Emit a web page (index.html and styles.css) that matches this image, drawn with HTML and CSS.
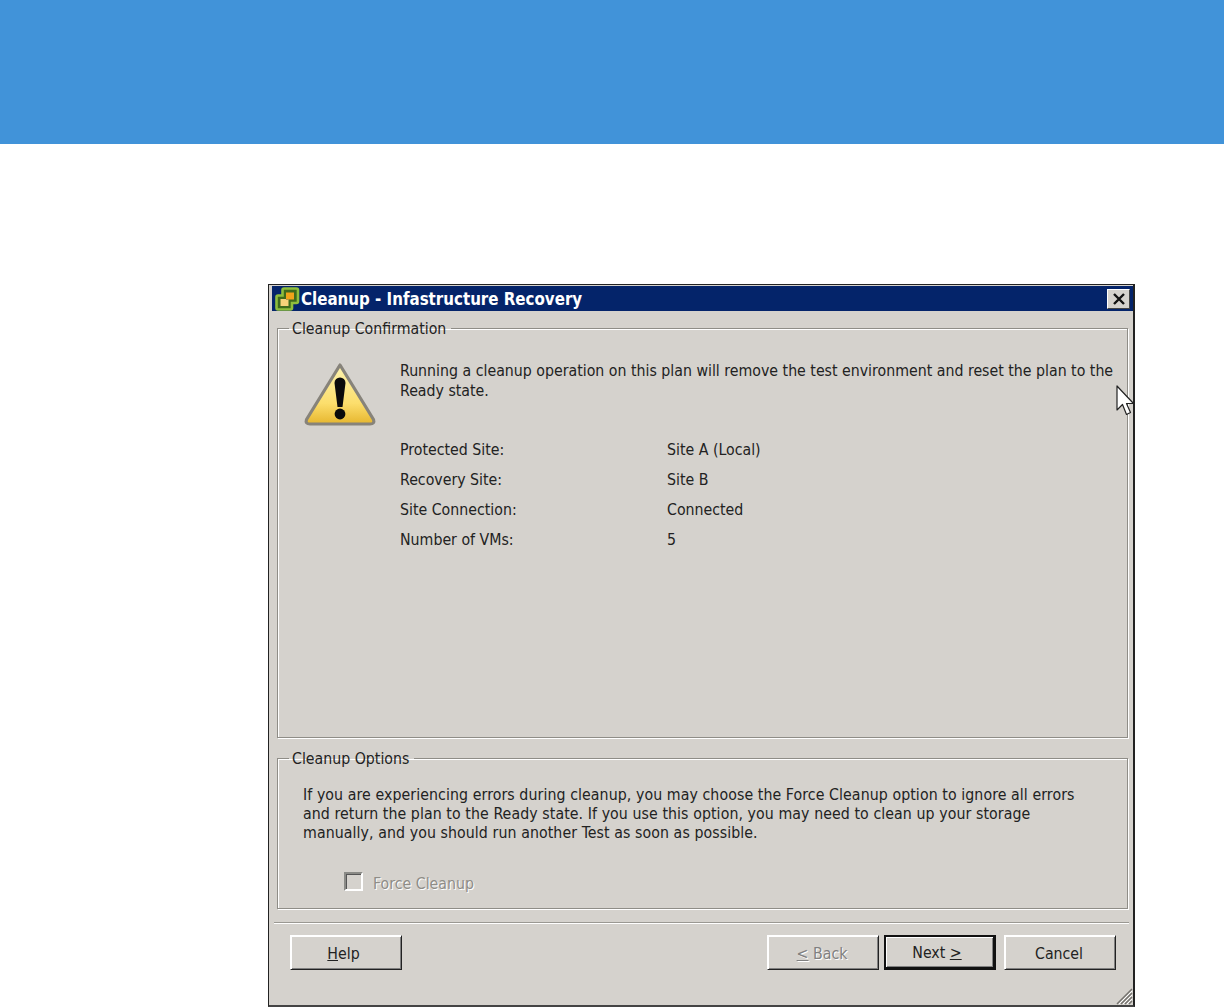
FILE: index.html
```html
<!DOCTYPE html>
<html lang="en">
<head>
<meta charset="utf-8">
<title>Cleanup - Infastructure Recovery</title>
<link rel="stylesheet" href="styles.css">
</head>
<body>
<header class="banner"></header>
<main class="stage">
  <section class="dialog">
    <div class="titlebar">
      <svg class="app-icon" viewBox="0 0 26 26" width="26" height="26">
        <path d="M10 2.500h12.500a1.500 1.500 0 0 1 1.500 1.500v11.500a1.500 1.500 0 0 1-1.500 1.500H18v5a1.500 1.500 0 0 1-1.500 1.500H4a1.500 1.500 0 0 1-1.500-1.500V11A1.500 1.500 0 0 1 4 9.500h4.500V4A1.500 1.500 0 0 1 10 2.500z" fill="#3f6a1c" stroke="#8fbe3c" stroke-width="2.600"/>
        <path d="M12 6.500h8v7h-8z" fill="#f2a31a"/>
        <path d="M6.500 13h8v7h-8z" fill="#f7d27a"/>
        <path d="M12 13h2.500v.5H12z" fill="#7a5a12"/>
      </svg>
      <span class="title-text">Cleanup - Infastructure Recovery</span>
      <button class="close" type="button" aria-label="Close">
        <svg viewBox="0 0 14 12" width="14" height="12"><path d="M2 1l10 10M12 1L2 11" stroke="#111" stroke-width="2.400" fill="none"/></svg>
      </button>
    </div>
    <div class="content">
      <fieldset class="group group-confirm">
        <legend>Cleanup Confirmation</legend>
        <div class="confirm-row">
          <svg class="warn" viewBox="0 0 74 66" width="74" height="66">
            <defs>
              <linearGradient id="warnFill" x1="0" y1="0" x2="0" y2="1">
                <stop offset="0" stop-color="#fdf3b0"/>
                <stop offset="0.650" stop-color="#fcde6c"/>
                <stop offset="1" stop-color="#e6b62e"/>
              </linearGradient>
            </defs>
            <path d="M37 4 L70.500 58.500 Q72 63 67 63 L7 63 Q2 63 3.500 58.500 Z" fill="url(#warnFill)" stroke="#87837a" stroke-width="3.200" stroke-linejoin="round"/>
            <path d="M31.500 22a5.500 5.500 0 0 1 11 0L39.500 46h-5z" fill="#0b0b0b"/>
            <circle cx="37" cy="53" r="5.400" fill="#0b0b0b"/>
          </svg>
          <div class="confirm-body">
            <p class="message">Running a cleanup operation on this plan will remove the test environment and reset the plan to the Ready state.</p>
            <dl class="facts">
              <dt>Protected Site:</dt><dd>Site A (Local)</dd>
              <dt>Recovery Site:</dt><dd>Site B</dd>
              <dt>Site Connection:</dt><dd>Connected</dd>
              <dt>Number of VMs:</dt><dd>5</dd>
            </dl>
          </div>
        </div>
      </fieldset>
      <fieldset class="group group-options">
        <legend>Cleanup Options</legend>
        <p class="options-text">If you are experiencing errors during cleanup, you may choose the Force Cleanup option to ignore all errors and return the plan to the Ready state. If you use this option, you may need to clean up your storage manually, and you should run another Test as soon as possible.</p>
        <label class="force">
          <span class="check"></span>
          <span class="force-label">Force Cleanup</span>
        </label>
      </fieldset>
    </div>
    <div class="separator"></div>
    <div class="actions">
      <button class="btn" type="button"><u>H</u>elp</button>
      <div class="actions-right">
        <button class="btn btn-disabled" type="button"><u>&lt;</u> Back</button>
        <button class="btn btn-default" type="button">Next <u>&gt;</u></button>
        <button class="btn btn-cancel" type="button">Cancel</button>
      </div>
    </div>
    <svg class="grip" viewBox="0 0 18 18" width="18" height="18">
      <path d="M17 2L2 17M17 6L6 17M17 10L10 17M17 14L14 17" stroke="#75736e" stroke-width="1.500" fill="none"/>
      <path d="M17 4L4 17M17 8L8 17M17 12L12 17" stroke="#fff" stroke-width="1" fill="none"/>
    </svg>
    <svg class="cursor" viewBox="0 0 18 32" width="18" height="32">
      <path d="M1 1V25L6.500 19.500L10.500 29.500L14.500 27.500L10.500 18.500H17.500Z" fill="#fff" stroke="#222" stroke-width="1.200" stroke-linejoin="round"/>
    </svg>
  </section>
</main>
</body>
</html>
```
FILE: styles.css
```css
* { box-sizing: border-box; }
html, body { margin: 0; padding: 0; background: #fff; }
body { height: 1007px; overflow: hidden; font-family: "DejaVu Sans Condensed", "DejaVu Sans", sans-serif; font-size: 15.750px; color: #222; }
.banner { height: 144px; background: #4193d9; }
.stage { padding: 140px 0 0 268px; }
.dialog {
  position: relative;
  width: 867px;
  height: 723px;
  background: #d5d2cd;
  border: 1px solid #222;
  border-right-width: 2px;
  border-bottom: 2px solid #444;
}
.titlebar {
  height: 25px;
  margin: 1px 0 0 3px;
  background: #04246a;
  display: flex;
  align-items: center;
  padding: 0 3px 0 2px;
  color: #fff;
  font-weight: bold;
}
.app-icon { flex: none; margin-right: 1px; }
.title-text { font-size: 16.750px; flex: 1; }
.close {
  width: 23px;
  height: 20px;
  padding: 0;
  background: #d5d2cd;
  border: 1px solid;
  border-color: #fff #444 #444 #fff;
  display: flex;
  align-items: center;
  justify-content: center;
}
.content { padding: 0 5px 0 8px; }
.group {
  margin: 0;
  padding: 0;
  min-width: 0;
  border: 1px solid #8f8d87;
  box-shadow: 1px 1px 0 #fff, inset 1px 1px 0 #fff;
}
.group legend { margin-left: 11px; padding: 0 5px 0 3px; line-height: 19px; color: #222; }
.group-confirm { height: 419px; margin-top: 8px; }
.group-options { height: 160px; margin-top: 11px; }
.confirm-row { display: flex; padding: 23px 0 0 25px; }
.warn { flex: none; margin-right: 23px; }
.confirm-body { flex: 1; }
.message { margin: 0; line-height: 19.500px; padding-right: 6px; }
.facts { margin: 40px 0 0; display: grid; grid-template-columns: 267px 1fr; grid-auto-rows: 30px; line-height: 19px; }
.facts dt, .facts dd { margin: 0; }
.options-text { margin: 17px 40px 0 25px; line-height: 19px; letter-spacing: 0.080px; }
.force { display: flex; align-items: center; margin: 30px 0 0 66px; gap: 10px; }
.check { width: 19px; height: 19px; margin-bottom: 4px; border: 2px solid; border-color: #8a8a86 #fff #fff #8a8a86; box-shadow: inset 1px 1px 0 #555; }
.force-label { color: #8f8d87; text-shadow: 1px 1px 0 #fff; }
.separator { height: 2px; margin: 13px 4px 0 5px; background: #9a9892; border-bottom: 1px solid #fff; }
.actions { display: flex; justify-content: space-between; padding: 11px 17px 0 21px; }
.actions-right { display: flex; gap: 5px; }
.btn {
  width: 112px;
  height: 35px;
  padding: 1px 5px 0 0;
  font: inherit;
  color: #222;
  background: #d5d2cd;
  border: 1px solid;
  border-color: #fff #222 #222 #fff;
  box-shadow: inset 1px 1px 0 #fff, inset -1px -1px 0 #808080;
}
.btn-disabled { color: #808080; text-shadow: 1px 1px 0 #fff; padding-right: 2px; }
.btn-default { border: 2px solid #111; border-right-width: 3px; border-bottom-width: 3px; box-shadow: inset 1px 1px 0 #fff, inset -1px -1px 0 #808080; }
.btn-cancel { margin-left: 3px; padding-right: 2px; }
.grip { position: absolute; right: 0; bottom: 0; }
.cursor { position: absolute; left: 847px; top: 100px; }
```
